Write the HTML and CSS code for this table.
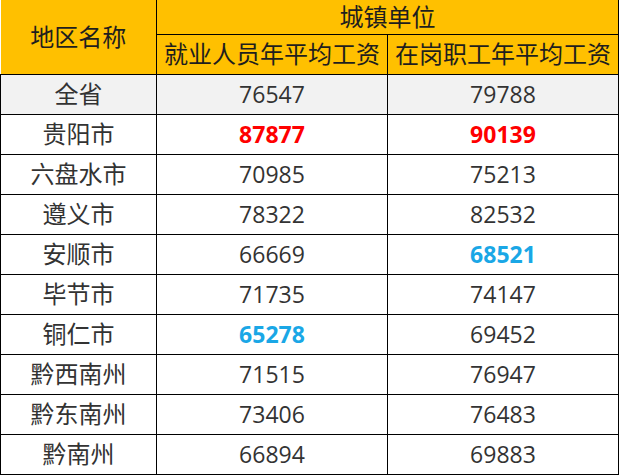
FILE: index.html
```html
<!DOCTYPE html>
<html lang="zh-CN">
<head>
<meta charset="utf-8">
<title>城镇单位平均工资</title>
<link rel="stylesheet" href="styles.css">
</head>
<body>
<table class="wage">
  <colgroup>
    <col class="c-region">
    <col class="c-val">
    <col class="c-val">
  </colgroup>
  <thead>
    <tr class="h1">
      <th rowspan="2" class="first">地区名称</th>
      <th colspan="2">城镇单位</th>
    </tr>
    <tr class="h2">
      <th>就业人员年平均工资</th>
      <th>在岗职工年平均工资</th>
    </tr>
  </thead>
  <tbody>
    <tr class="gray"><td class="name">全省</td><td>76547</td><td>79788</td></tr>
    <tr><td class="name">贵阳市</td><td class="red">87877</td><td class="red">90139</td></tr>
    <tr><td class="name">六盘水市</td><td>70985</td><td>75213</td></tr>
    <tr><td class="name">遵义市</td><td>78322</td><td>82532</td></tr>
    <tr><td class="name">安顺市</td><td>66669</td><td class="blue">68521</td></tr>
    <tr><td class="name">毕节市</td><td>71735</td><td>74147</td></tr>
    <tr><td class="name">铜仁市</td><td class="blue">65278</td><td>69452</td></tr>
    <tr><td class="name">黔西南州</td><td>71515</td><td>76947</td></tr>
    <tr><td class="name">黔东南州</td><td>73406</td><td>76483</td></tr>
    <tr><td class="name">黔南州</td><td>66894</td><td>69883</td></tr>
  </tbody>
</table>
</body>
</html>
```
FILE: styles.css
```css
html, body {
  margin: 0;
  padding: 0;
  background: #ffffff;
}
.wage {
  border-collapse: collapse;
  table-layout: fixed;
  width: 619px;
  font-family: "Open Sans", "Noto Sans CJK SC", sans-serif;
  font-size: 23px;
  color: #333333;
}
.c-region { width: 156px; }
.c-val { width: 231px; }
.wage th, .wage td {
  border: 1px solid #000000;
  padding: 0;
  text-align: center;
  vertical-align: middle;
  font-weight: normal;
  line-height: 1;
}
.wage thead th {
  background: #ffc000;
  color: #1e1e1e;
  border-top: none;
  font-size: 24px;
}
.wage tbody .name {
  font-size: 24px;
}
.wage thead .first {
  border-left: none;
}
.h1 { height: 34px; }
.h2 { height: 40px; }
.wage tbody tr { height: 40px; }
.gray td { background: #f2f2f2; }
.red { color: #ff0000; font-weight: bold !important; }
.blue { color: #1aa7e6; font-weight: bold !important; }
```
